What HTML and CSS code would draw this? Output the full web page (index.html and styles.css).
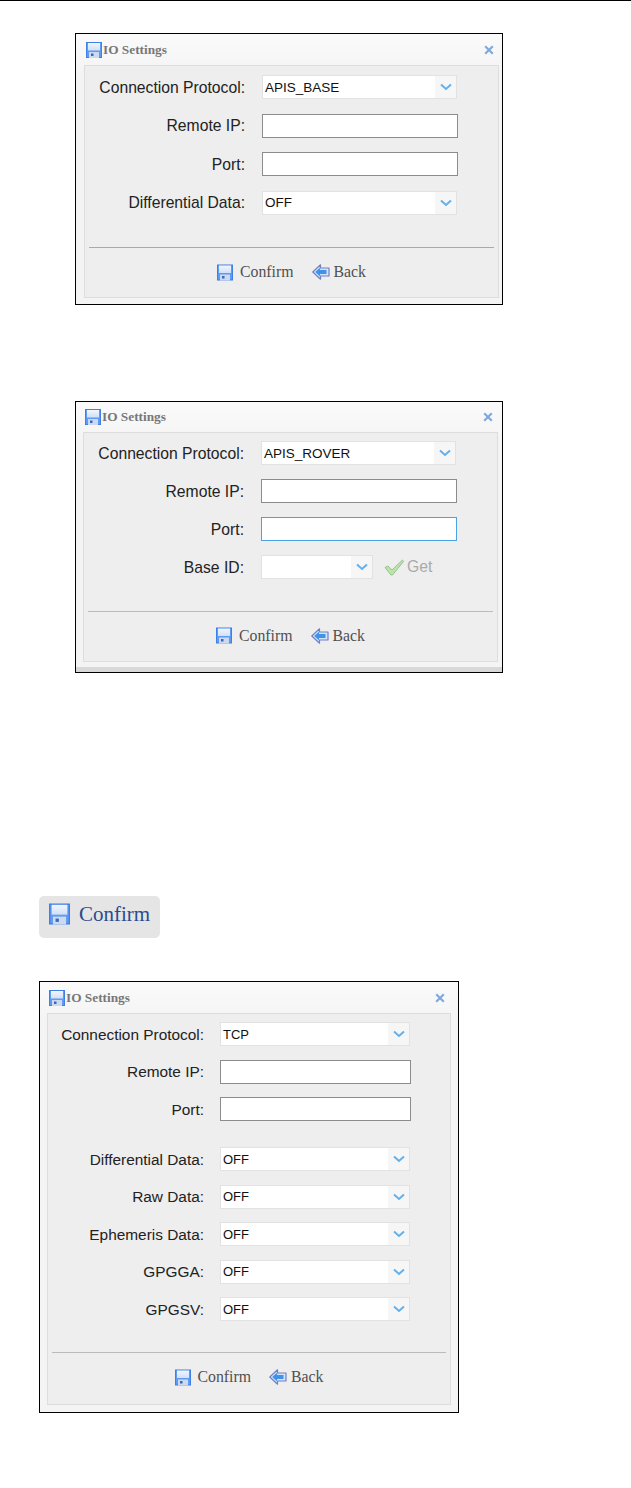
FILE: index.html
```html
<!DOCTYPE html>
<html lang="en">
<head>
  <meta charset="UTF-8" />
  <title>IO Settings</title>
  <link rel="stylesheet" href="styles.css">
</head>
<body>

<svg class="defs" width="0" height="0">
  <defs>
    <linearGradient id="labelFill" x1="0" y1="0" x2="0" y2="1">
      <stop offset="0" stop-color="#f2f6fd"/>
      <stop offset="1" stop-color="#cfe0f8"/>
    </linearGradient>
    <symbol id="floppy" viewBox="0 0 16 16">
      <rect x="0" y="0" width="16" height="16" fill="#3f7fe8"/>
      <rect x="1" y="1" width="14" height="14" fill="#5f9bf0"/>
      <rect x="2" y="1" width="12" height="7.500" fill="url(#labelFill)"/>
      <rect x="3" y="10" width="10" height="6" fill="#cdd9ee"/>
      <rect x="5" y="11.500" width="2.500" height="2.500" fill="#3568c8"/>
    </symbol>
    <symbol id="back" viewBox="0 0 18 16">
      <path d="M8.500 0.800 L0.800 8 L8.500 15.200 V12 H17 V4 H8.500 Z" fill="#d4e4f7" stroke="#6f80c4" stroke-width="1.200" stroke-linejoin="round"/>
      <path d="M8 3.800 L3.200 8 L8 12.200 V10 H14.500 V6 H8 Z" fill="#3f92ea"/>
    </symbol>
    <symbol id="close" viewBox="0 0 10 10">
      <path d="M1.200 1.200 L8.800 8.800 M8.800 1.200 L1.200 8.800" stroke="#7fa9dc" stroke-width="2.200" fill="none"/>
    </symbol>
    <symbol id="chevron" viewBox="0 0 12 8">
      <path d="M1 1.500 L6 6 L11 1.500" stroke="#62b0ec" stroke-width="2" fill="none"/>
    </symbol>
    <symbol id="check" viewBox="0 0 20 17">
      <path d="M1 8.500 L4 7 L8 11 L18.500 1 L19.500 2.500 L8.500 16 H7 Z" fill="#b9e6a6" stroke="#9cbf92" stroke-width="1" stroke-linejoin="round"/>
    </symbol>
  </defs>
</svg>

<div class="rule"></div>

<!-- base -->
<div class="dialog dialog-one">
  <div class="title-bar">
    <svg class="ico-title"><use href="#floppy"/></svg>
    <span class="title">IO Settings</span>
    <svg class="ico-close"><use href="#close"/></svg>
  </div>
  <div class="panel">
    <div class="form">
      <label>Connection Protocol:</label>
      <div class="select"><span>APIS_BASE</span><i><svg><use href="#chevron"/></svg></i></div>
      <label>Remote IP:</label>
      <div class="input"></div>
      <label>Port:</label>
      <div class="input"></div>
      <label>Differential Data:</label>
      <div class="select"><span>OFF</span><i><svg><use href="#chevron"/></svg></i></div>
    </div>
    <div class="divider"></div>
    <div class="actions">
      <a class="action"><svg class="ico-save"><use href="#floppy"/></svg>Confirm</a>
      <a class="action"><svg class="ico-back"><use href="#back"/></svg>Back</a>
    </div>
  </div>
</div>

<!-- rover -->
<div class="dialog dialog-two">
  <div class="title-bar">
    <svg class="ico-title"><use href="#floppy"/></svg>
    <span class="title">IO Settings</span>
    <svg class="ico-close"><use href="#close"/></svg>
  </div>
  <div class="panel">
    <div class="form">
      <label>Connection Protocol:</label>
      <div class="select"><span>APIS_ROVER</span><i><svg><use href="#chevron"/></svg></i></div>
      <label>Remote IP:</label>
      <div class="input"></div>
      <label>Port:</label>
      <div class="input focus"></div>
      <label>Base ID:</label>
      <div class="base-id">
        <div class="select select-short"><span></span><i><svg><use href="#chevron"/></svg></i></div>
        <a class="get"><svg class="ico-check"><use href="#check"/></svg>Get</a>
      </div>
    </div>
    <div class="divider"></div>
    <div class="actions">
      <a class="action"><svg class="ico-save"><use href="#floppy"/></svg>Confirm</a>
      <a class="action"><svg class="ico-back"><use href="#back"/></svg>Back</a>
    </div>
  </div>
</div>

<div class="confirm-btn"><svg class="ico-big"><use href="#floppy"/></svg>Confirm</div>

<!-- tcp -->
<div class="dialog dialog-three">
  <div class="title-bar">
    <svg class="ico-title"><use href="#floppy"/></svg>
    <span class="title">IO Settings</span>
    <svg class="ico-close"><use href="#close"/></svg>
  </div>
  <div class="panel">
    <div class="form">
      <label>Connection Protocol:</label>
      <div class="select"><span>TCP</span><i><svg><use href="#chevron"/></svg></i></div>
      <label>Remote IP:</label>
      <div class="input"></div>
      <label>Port:</label>
      <div class="input"></div>
      <label class="spaced">Differential Data:</label>
      <div class="select spaced"><span>OFF</span><i><svg><use href="#chevron"/></svg></i></div>
      <label>Raw Data:</label>
      <div class="select"><span>OFF</span><i><svg><use href="#chevron"/></svg></i></div>
      <label>Ephemeris Data:</label>
      <div class="select"><span>OFF</span><i><svg><use href="#chevron"/></svg></i></div>
      <label>GPGGA:</label>
      <div class="select"><span>OFF</span><i><svg><use href="#chevron"/></svg></i></div>
      <label>GPGSV:</label>
      <div class="select"><span>OFF</span><i><svg><use href="#chevron"/></svg></i></div>
    </div>
    <div class="divider"></div>
    <div class="actions">
      <a class="action"><svg class="ico-save"><use href="#floppy"/></svg>Confirm</a>
      <a class="action"><svg class="ico-back"><use href="#back"/></svg>Back</a>
    </div>
  </div>
</div>

</body>
</html>
```

FILE: styles.css
```css
* {
  box-sizing: border-box;
}
body {
  margin: 0;
  background: #fff;
  font-family: "Liberation Sans", Arial, sans-serif;
  color: #222;
}
.defs {
  display: block;
  height: 0;
}
.rule {
  height: 1px;
  background: #000;
}

/* dialogs */
.dialog {
  border: 1px solid #000;
  background: linear-gradient(#fafafa, #f4f4f4 40px);
  display: flex;
  flex-direction: column;
}
.dialog-one {
  margin: 32px 0 0 75px;
  width: 428px;
  height: 272px;
  padding: 0 3px 6px 8px;
}
.dialog-two {
  margin: 96px 0 0 75px;
  width: 428px;
  height: 272px;
  padding: 0 4px 10px 7px;
  box-shadow: inset 0 -5px 0 #d8d8d8;
}
.dialog-three {
  margin: 43px 0 0 39px;
  width: 420px;
  height: 432px;
  padding: 0 7px 7px 7px;
}
.title-bar {
  height: 31px;
  flex: none;
  display: flex;
  align-items: center;
  padding-right: 5px;
}
.dialog-two .title-bar {
  height: 30px;
}
.dialog-three .title-bar {
  padding-right: 6px;
}
.ico-title {
  width: 16px;
  height: 16px;
  margin: 0 1px 0 2px;
}
.title {
  font-family: "Liberation Serif", serif;
  font-weight: bold;
  font-size: 13.3px;
  color: #777;
}
.ico-close {
  width: 10px;
  height: 10px;
  margin-left: auto;
}
.panel {
  flex: 1;
  border: 1px solid #ddd;
  background: #eee;
  display: flex;
  flex-direction: column;
}

/* form */
.form {
  display: grid;
  align-items: center;
  padding-top: 9px;
}
.dialog-one .form {
  grid-template-columns: 160px 197px;
  column-gap: 17px;
  row-gap: 14.5px;
}
.dialog-two .form {
  grid-template-columns: 160px 197px;
  column-gap: 17px;
  row-gap: 14px;
  padding-top: 8px;
}
.dialog-three .form {
  grid-template-columns: 156px 191px;
  column-gap: 16px;
  row-gap: 13.5px;
  padding-top: 8px;
}
.form label {
  font-size: 15.7px;
  text-align: right;
  white-space: nowrap;
  padding-top: 1px;
}
.dialog-three .form label {
  font-size: 15.4px;
}
.form .spaced {
  margin-top: 12.5px;
}
.select {
  height: 24px;
  width: 195px;
  border: 1px solid #e2e2e2;
  background: #fff;
  display: flex;
  align-items: center;
  font-size: 13.5px;
  color: #111;
  padding-left: 2px;
}
.dialog-three .select {
  width: 190px;
  font-size: 13px;
}
.select span {
  flex: 1;
}
.select i {
  width: 21px;
  height: 100%;
  background: #f6f6f6;
  display: flex;
  align-items: center;
  justify-content: center;
}
.select svg {
  width: 12px;
  height: 8px;
}
.select-short {
  width: 112px;
}
.input {
  height: 24px;
  width: 196px;
  border: 1px solid #8c8c8c;
  background: #fff;
}
.dialog-three .input {
  width: 191px;
}
.input.focus {
  border-color: #4aa3e0;
}
.base-id {
  display: flex;
  align-items: center;
}
.get {
  display: flex;
  align-items: center;
  font-size: 15.7px;
  color: #aaa;
  margin-left: 11px;
}
.ico-check {
  width: 20px;
  height: 17px;
  margin-right: 3px;
}

/* footer */
.divider {
  height: 1px;
  background: #aaa;
  margin: 0 4px;
}
.dialog-one .divider {
  margin-top: 32px;
}
.dialog-two .divider {
  margin-top: 32px;
  background: #bbb;
}
.dialog-three .divider {
  margin-top: 31px;
  background: #bbb;
}
.actions {
  flex: 1;
  display: flex;
  align-items: center;
  justify-content: center;
  gap: 18px;
  font-family: "Liberation Serif", serif;
  font-size: 15.8px;
  color: #505050;
}
.dialog-two .actions {
  padding-bottom: 2px;
}
.dialog-three .actions {
  padding-bottom: 3px;
}
.action {
  display: flex;
  align-items: center;
}
.ico-save {
  width: 16px;
  height: 17px;
  margin-right: 7px;
}
.ico-back {
  width: 18px;
  height: 16px;
  margin-right: 4px;
}

/* big confirm */
.confirm-btn {
  margin: 223px 0 0 39px;
  width: 121px;
  height: 42px;
  background: #e5e5e5;
  border-radius: 5px;
  display: flex;
  align-items: center;
  padding: 0 0 6px 10px;
  font-family: "Liberation Serif", serif;
  font-size: 21px;
  color: #2a4c8f;
}
.ico-big {
  width: 21px;
  height: 22px;
  margin-right: 9px;
}
```
